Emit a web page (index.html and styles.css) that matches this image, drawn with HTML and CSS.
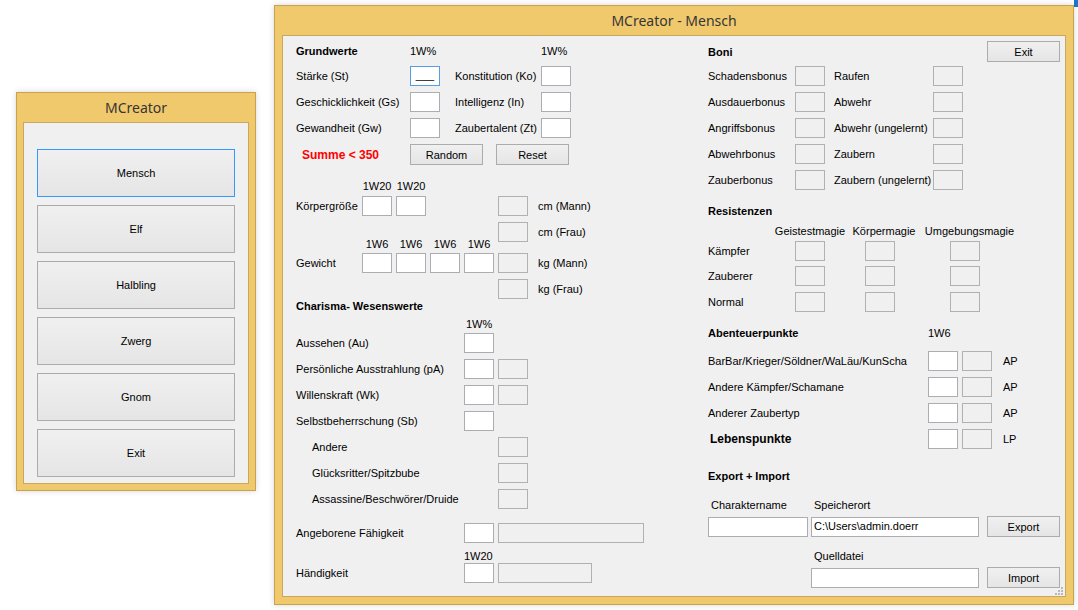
FILE: index.html
```html
<!DOCTYPE html>
<html lang="de">
<head>
<meta charset="utf-8">
<title>MCreator</title>
<link rel="stylesheet" href="styles.css">
</head>
<body>
<div class="desk-strip"></div>

<div class="win win-small">
  <div class="win-title">MCreator</div>
  <div class="client menu">
    <button class="btn menu-btn focus">Mensch</button>
    <button class="btn menu-btn">Elf</button>
    <button class="btn menu-btn">Halbling</button>
    <button class="btn menu-btn">Zwerg</button>
    <button class="btn menu-btn">Gnom</button>
    <button class="btn menu-btn">Exit</button>
  </div>
</div>

<div class="win win-main">
  <div class="win-title">MCreator - Mensch</div>
  <div class="client form">
    <div class="left">
      <div class="g-grund">
        <b>Grundwerte</b><span>1W%</span><span class="h2">1W%</span>
        <span>Stärke (St)</span><div class="tb focus">___</div><span class="l2">Konstitution (Ko)</span><div class="tb"></div>
        <span>Geschicklichkeit (Gs)</span><div class="tb"></div><span class="l2">Intelligenz (In)</span><div class="tb"></div>
        <span>Gewandheit (Gw)</span><div class="tb"></div><span class="l2">Zaubertalent (Zt)</span><div class="tb"></div>
        <b class="sum">Summe &lt; 350</b>
        <div class="pair"><button class="btn sbtn">Random</button><button class="btn sbtn">Reset</button></div>
      </div>

      <div class="k-lab k-first"><span class="n c2">1W20</span><span class="n">1W20</span></div>
      <div class="k-row"><span>Körpergröße</span><div class="tb"></div><div class="tb"></div><div class="tb ro c6"></div><span class="unit">cm (Mann)</span></div>
      <div class="k-row mt6"><div class="tb ro c6"></div><span class="unit">cm (Frau)</span></div>
      <div class="k-lab k-second"><span class="n c2">1W6</span><span class="n">1W6</span><span class="n">1W6</span><span class="n">1W6</span></div>
      <div class="k-row mt2"><span>Gewicht</span><div class="tb"></div><div class="tb"></div><div class="tb"></div><div class="tb"></div><div class="tb ro"></div><span class="unit">kg (Mann)</span></div>
      <div class="k-row mt6"><div class="tb ro c6"></div><span class="unit">kg (Frau)</span></div>

      <b class="sec-title cha-title">Charisma- Wesenswerte</b>
      <div class="c-lab mt5"><span class="c2 w-lab">1W%</span></div>
      <div class="c-row mt2"><span>Aussehen (Au)</span><div class="tb"></div></div>
      <div class="c-row mt6"><span>Persönliche Ausstrahlung (pA)</span><div class="tb"></div><div class="tb ro"></div></div>
      <div class="c-row mt6"><span>Willenskraft (Wk)</span><div class="tb"></div><div class="tb ro"></div></div>
      <div class="c-row mt6"><span>Selbstbeherrschung (Sb)</span><div class="tb"></div></div>
      <div class="c-row mt6"><span class="ind">Andere</span><div class="tb ro c3"></div></div>
      <div class="c-row mt6"><span class="ind">Glücksritter/Spitzbube</span><div class="tb ro c3"></div></div>
      <div class="c-row mt6"><span class="ind">Assassine/Beschwörer/Druide</span><div class="tb ro c3"></div></div>
      <div class="c-row mt14"><span>Angeborene Fähigkeit</span><div class="tb"></div><div class="tb ro wide-a"></div></div>
      <div class="c-lab mt7"><span class="c2">1W20</span></div>
      <div class="c-row"><span>Händigkeit</span><div class="tb"></div><div class="tb ro wide-h"></div></div>
    </div>

    <div class="right">
      <div class="boni-head"><b>Boni</b><button class="btn sbtn">Exit</button></div>
      <div class="boni">
        <span>Schadensbonus</span><div class="tb ro"></div><span class="l2">Raufen</span><div class="tb ro"></div>
        <span>Ausdauerbonus</span><div class="tb ro"></div><span class="l2">Abwehr</span><div class="tb ro"></div>
        <span>Angriffsbonus</span><div class="tb ro"></div><span class="l2">Abwehr (ungelernt)</span><div class="tb ro"></div>
        <span>Abwehrbonus</span><div class="tb ro"></div><span class="l2">Zaubern</span><div class="tb ro"></div>
        <span>Zauberbonus</span><div class="tb ro"></div><span class="l2">Zaubern (ungelernt)</span><div class="tb ro"></div>
      </div>

      <b class="sec-title res-title">Resistenzen</b>
      <div class="r-lab"><span class="hc c2">Geistestmagie</span><span class="hc c4 hk">Körpermagie</span><span class="hc c6 hu">Umgebungsmagie</span></div>
      <div class="r-row mt3"><span>Kämpfer</span><div class="tb ro"></div><div class="tb ro c4"></div><div class="tb ro c6"></div></div>
      <div class="r-row mt5"><span>Zauberer</span><div class="tb ro"></div><div class="tb ro c4"></div><div class="tb ro c6"></div></div>
      <div class="r-row mt6"><span>Normal</span><div class="tb ro"></div><div class="tb ro c4"></div><div class="tb ro c6"></div></div>

      <div class="a-head"><b>Abenteuerpunkte</b><span>1W6</span></div>
      <div class="a-row mt11"><span>BarBar/Krieger/Söldner/WaLäu/KunScha</span><div class="tb"></div><div class="tb ro"></div><span class="unit">AP</span></div>
      <div class="a-row mt6"><span>Andere Kämpfer/Schamane</span><div class="tb"></div><div class="tb ro"></div><span class="unit">AP</span></div>
      <div class="a-row mt6"><span>Anderer Zaubertyp</span><div class="tb"></div><div class="tb ro"></div><span class="unit">AP</span></div>
      <div class="a-row mt6"><b class="lp">Lebenspunkte</b><div class="tb"></div><div class="tb ro"></div><span class="unit">LP</span></div>

      <b class="sec-title exp-title">Export + Import</b>
      <div class="e-labels"><span class="e-name">Charaktername</span><span>Speicherort</span></div>
      <div class="e-row mt4"><div class="tb e-in1"></div><div class="tb e-in2">C:\Users\admin.doerr</div><button class="btn sbtn e-btn">Export</button></div>
      <div class="e-labels e-q"><span>Quelldatei</span></div>
      <div class="e-row mt4"><div class="e-spacer"></div><div class="tb e-in2"></div><button class="btn sbtn e-btn">Import</button></div>
    </div>

    <svg class="grip" width="8" height="8" viewBox="0 0 8 8">
      <rect x="6" y="0" width="2" height="2" fill="#b9b9b9"/>
      <rect x="3" y="3" width="2" height="2" fill="#b9b9b9"/>
      <rect x="6" y="3" width="2" height="2" fill="#b9b9b9"/>
      <rect x="0" y="6" width="2" height="2" fill="#b9b9b9"/>
      <rect x="3" y="6" width="2" height="2" fill="#b9b9b9"/>
      <rect x="6" y="6" width="2" height="2" fill="#b9b9b9"/>
    </svg>
  </div>
</div>
</body>
</html>
```

FILE: styles.css
```css
* { box-sizing: border-box; }
html, body { margin: 0; padding: 0; }
body {
  width: 1078px;
  height: 610px;
  position: relative;
  overflow: hidden;
  background: #ffffff;
  font-family: "Liberation Sans", Arial, sans-serif;
  font-size: 11px;
  color: #000;
}
b { font-weight: bold; }

.desk-strip {
  position: absolute;
  left: 1074px;
  top: 0;
  width: 4px;
  height: 7px;
  background: #1b78cc;
}

/* windows */
.win {
  position: absolute;
  display: flex;
  flex-direction: column;
  background: #f0c96d;
  border: 1px solid #c9a24f;
  box-shadow: 0 0 6px rgba(0, 0, 0, 0.16);
}
.win-small { left: 16px; top: 92px; width: 240px; height: 399px; padding: 0 6px 6px; }
.win-main { left: 274px; top: 5px; width: 800px; height: 600px; padding: 0 7px 7px; }
.win-title {
  height: 29px;
  flex: none;
  display: flex;
  align-items: center;
  justify-content: center;
  font-family: "Noto Sans", "Open Sans", sans-serif;
  font-size: 14px;
  color: #363636;
}
.client {
  flex: 1;
  background: #f0f0f0;
  border: 1px solid #c9a75e;
}

/* buttons */
.btn {
  margin: 0;
  padding: 0;
  font-family: "Liberation Sans", Arial, sans-serif;
  font-size: 11px;
  color: #000;
  background: linear-gradient(#f0f0f0, #e5e5e5);
  border: 1px solid #acacac;
}
.btn.focus { border-color: #3399ff; }
.sbtn { width: 73px; height: 21px; }

.menu {
  display: flex;
  flex-direction: column;
  gap: 8px;
  padding: 26px 13px 0;
}
.menu-btn { height: 48px; }

/* text boxes */
.tb {
  width: 30px;
  height: 20px;
  background: #fff;
  border: 1px solid #abadb3;
  text-align: center;
  line-height: 17px;
  white-space: nowrap;
  overflow: hidden;
}
.tb.ro { background: #f0f0f0; border-color: #b1b1b1; }
.tb.focus { border-color: #569de5; }

/* main form */
.form {
  position: relative;
  display: flex;
  padding: 5px 5px 0 13px;
}
.left { width: 412px; flex: none; display: flex; flex-direction: column; }
.right { flex: 1; display: flex; flex-direction: column; }

.c2 { grid-column: 2; }
.c3 { grid-column: 3; }
.c4 { grid-column: 4; }
.c6 { grid-column: 6; }
.mt2 { margin-top: 2px; }
.mt3 { margin-top: 3px; }
.mt4 { margin-top: 4px; }
.mt5 { margin-top: 5px; }
.mt6 { margin-top: 6px; }
.mt7 { margin-top: 7px; }
.mt11 { margin-top: 11px; }
.mt14 { margin-top: 14px; }

.sec-title { display: block; height: 13px; line-height: 13px; white-space: nowrap; }

/* Grundwerte */
.g-grund {
  display: grid;
  grid-template-columns: 114px 30px 15px 86px 30px;
  grid-template-rows: 19px repeat(3, 20px) 21px;
  row-gap: 6px;
  align-items: center;
  white-space: nowrap;
}
.g-grund .h2 { grid-column: 5; }
.g-grund .l2 { grid-column: 4; }
.sum { grid-column: 1; padding-left: 6px; color: #ff0000; font-size: 12px; }
.pair { grid-column: 2 / 6; display: flex; gap: 13px; }

/* Körper */
.k-lab, .k-row {
  display: grid;
  grid-template-columns: 62px repeat(5, 30px) auto;
  column-gap: 4px;
  white-space: nowrap;
}
.k-lab { height: 13px; line-height: 13px; }
.k-lab .n { display: flex; justify-content: center; }
.k-first { margin-top: 15px; margin-bottom: 3px; }
.k-second { margin-top: -4px; }
.k-row { height: 20px; align-items: center; }
.unit { padding-left: 6px; }

/* Charisma */
.cha-title { margin-top: 1px; }
.c-lab, .c-row {
  display: grid;
  grid-template-columns: 164px 30px auto;
  column-gap: 4px;
  white-space: nowrap;
}
.c-lab { height: 13px; line-height: 13px; }
.w-lab { padding-left: 2px; }
.c-row { height: 20px; align-items: center; }
.ind { padding-left: 16px; }
.wide-a { width: 146px; }
.wide-h { width: 94px; }

/* Boni */
.boni-head {
  display: flex;
  justify-content: space-between;
  align-items: center;
  height: 21px;
}
.boni {
  margin-top: 4px;
  display: grid;
  grid-template-columns: 87px 30px 9px 99px 30px;
  grid-auto-rows: 20px;
  row-gap: 6px;
  align-items: center;
  white-space: nowrap;
}
.boni .l2 { grid-column: 4; }

/* Resistenzen */
.res-title { margin-top: 15px; }
.r-lab, .r-row {
  display: grid;
  grid-template-columns: 87px 30px 40px 30px 55px 30px;
  white-space: nowrap;
}
.r-lab { margin-top: 7px; height: 13px; line-height: 13px; }
.hc { display: flex; justify-content: center; }
.hk { padding-left: 8px; }
.hu { padding-left: 9px; }
.r-row { height: 20px; align-items: center; }

/* Abenteuerpunkte */
.a-head, .a-row {
  display: grid;
  grid-template-columns: 216px 30px 30px auto;
  column-gap: 4px;
  white-space: nowrap;
}
.a-head { margin-top: 15px; height: 13px; line-height: 13px; }
.a-row { height: 20px; align-items: center; }
.a-row .unit { padding-left: 7px; }
.lp { padding-left: 2px; font-size: 12px; }

/* Export + Import */
.exp-title { margin-top: 21px; }
.e-labels {
  margin-top: 16px;
  display: flex;
  height: 13px;
  line-height: 13px;
  white-space: nowrap;
}
.e-labels span { padding-left: 3px; }
.e-labels .e-name { width: 103px; }
.e-q { margin-top: 13px; padding-left: 103px; }
.e-row { display: flex; height: 21px; align-items: flex-start; }
.e-row .tb { margin-top: 1px; }
.e-in1 { width: 100px; }
.e-spacer { width: 103px; flex: none; }
.e-in2 { width: 168px; margin-left: 3px; text-align: left; padding-left: 2px; }
.e-spacer + .e-in2 { margin-left: 0; }
.e-btn { margin-left: 8px; }

.grip { position: absolute; right: 2px; bottom: 1px; }
```
